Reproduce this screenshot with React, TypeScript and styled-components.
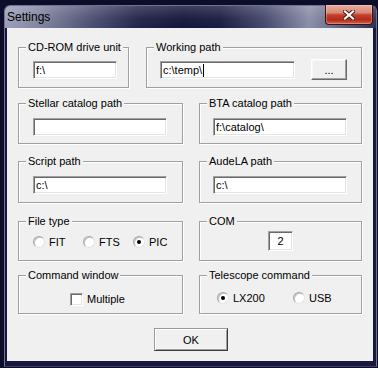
import React from "react";
import styled, { createGlobalStyle } from "styled-components";

const Global = createGlobalStyle`
  html, body { margin: 0; padding: 0; background: #0c0d29; }
  body { width: 378px; height: 368px; overflow: hidden; font-family: "Liberation Sans", Arial, sans-serif; }
  * { box-sizing: border-box; }
`;

const Page = styled.div`
  width: 378px;
  height: 368px;
  padding: 5px 1px 1px 4px;
  display: flex;
`;

const Window = styled.div`
  flex: 1;
  display: flex;
  flex-direction: column;
  border: 1px solid #6f7292;
  border-bottom-color: #3b3d5c;
  border-radius: 6px 6px 0 0;
  background: #17183b;
`;

const TitleBar = styled.div`
  height: 22px;
  display: flex;
  align-items: flex-start;
  padding-left: 2px;
  border-radius: 5px 5px 0 0;
  background:
    linear-gradient(180deg, rgba(255,255,255,0.18) 0%, rgba(255,255,255,0.04) 55%, rgba(0,0,0,0) 100%),
    linear-gradient(90deg, #9c9fb8 0%, #7f829e 10%, #4a4c70 24%, #22234a 36%, #14153a 48%, #1b1c42 58%, #45476c 70%, #8b8ea8 82%, #6c6f8d 88%, #2c2e52 100%);
`;

const Title = styled.span`
  font-size: 12px;
  line-height: 14px;
  padding-top: 4px;
  color: #000;
  flex: 1;
`;

const CloseButton = styled.div`
  width: 48px;
  height: 20px;
  margin: -1px 3px 0 0;
  border: 1px solid #3b1410;
  border-top: none;
  border-radius: 0 0 4px 4px;
  background: linear-gradient(180deg, #e9ab9c 0%, #d98a78 40%, #c4402d 52%, #b52a1a 78%, #d0654f 100%);
  box-shadow: inset 0 0 0 1px rgba(255,255,255,0.25);
  display: flex;
  align-items: center;
  justify-content: center;
`;

const Client = styled.div`
  flex: 1;
  margin: 0 3px 5px 2px;
  background: #f0f0f0;
  padding: 19px 11px 0 11px;
  display: flex;
  flex-direction: column;
  font-size: 11px;
  color: #000;
`;

const Row = styled.div<{ $cols: string; $mt?: number }>`
  display: grid;
  grid-template-columns: ${(p) => p.$cols};
  column-gap: ${(p) => (p.$cols === "111px 216px" ? 17 : 16)}px;
  margin-top: ${(p) => p.$mt ?? 0}px;
`;

const Group = styled.div<{ $h: number; $pt?: number; $pl?: number; $center?: boolean }>`
  position: relative;
  height: ${(p) => p.$h}px;
  border: 1px solid #a0a0a0;
  box-shadow: inset 1px 1px 0 #fff, 1px 1px 0 #fff;
  padding: ${(p) => p.$pt ?? 13}px 0 0 ${(p) => p.$pl ?? 14}px;
  display: flex;
  align-items: flex-start;
  justify-content: ${(p) => (p.$center ? "center" : "flex-start")};
`;

const Legend = styled.span`
  position: absolute;
  top: -7px;
  left: 7px;
  padding: 0 2px;
  background: #f0f0f0;
  line-height: 13px;
  white-space: nowrap;
`;

const Field = styled.div<{ $w: number; $h?: number; $center?: boolean }>`
  width: ${(p) => p.$w}px;
  height: ${(p) => p.$h ?? 18}px;
  background: #fff;
  border: 1px solid;
  border-color: #a0a0a0 #fff #fff #a0a0a0;
  box-shadow: inset 1px 1px 0 #696969, inset -1px -1px 0 #e3e3e3;
  padding: 0 2px;
  line-height: ${(p) => (p.$h ?? 18) - 2}px;
  text-align: ${(p) => (p.$center ? "center" : "left")};
  white-space: nowrap;
  overflow: hidden;
  display: flex;
  align-items: center;
  justify-content: ${(p) => (p.$center ? "center" : "flex-start")};
`;

const Caret = styled.span`
  display: inline-block;
  width: 1px;
  height: 13px;
  background: #000;
  margin-left: 1px;
`;

const Button = styled.button<{ $w: number; $h: number; $default?: boolean }>`
  width: ${(p) => p.$w}px;
  height: ${(p) => p.$h}px;
  padding: 0;
  font-family: "Liberation Sans", Arial, sans-serif;
  font-size: 11px;
  color: #000;
  background: #f0f0f0;
  border: 1px solid;
  border-color: ${(p) => (p.$default ? "#9a9a9a #3c3c3c #3c3c3c #9a9a9a" : "#fff #696969 #696969 #fff")};
  box-shadow: ${(p) =>
    p.$default ? "inset 1px 1px 0 #fff, inset -1px -1px 0 #a0a0a0" : "inset -1px -1px 0 #a0a0a0, inset 1px 1px 0 #f8f8f8"};
`;

const Options = styled.div<{ $step: number }>`
  display: flex;
  > label { width: ${(p) => p.$step}px; }
`;

const Option = styled.label`
  display: flex;
  align-items: center;
  gap: 4px;
  height: 14px;
  white-space: nowrap;
`;

const Radio = styled.span<{ $on?: boolean }>`
  width: 12px;
  height: 12px;
  border-radius: 50%;
  background: #fff;
  border: 1px solid;
  border-color: #a6a6a6 #e4e4e4 #e4e4e4 #a6a6a6;
  box-shadow: inset 1px 1px 0 #c4c4c4;
  display: flex;
  align-items: center;
  justify-content: center;
  &::after {
    content: "";
    width: 4px;
    height: 4px;
    border-radius: 50%;
    background: ${(p) => (p.$on ? "#000" : "transparent")};
  }
`;

const Check = styled.span`
  width: 13px;
  height: 13px;
  background: #fff;
  border: 1px solid;
  border-color: #a0a0a0 #fff #fff #a0a0a0;
  box-shadow: inset 1px 1px 0 #696969, inset -1px -1px 0 #e3e3e3;
`;

const Footer = styled.div`
  margin-top: 14px;
  display: flex;
  justify-content: center;
  padding-left: 2px;
`;

function CloseIcon() {
  return (
    <svg width="12" height="10" viewBox="0 0 12 10">
      <path d="M2 1.5 L10 8.5 M10 1.5 L2 8.5" stroke="#4a1a14" strokeWidth="4" strokeLinecap="square" />
      <path d="M2 1.5 L10 8.5 M10 1.5 L2 8.5" stroke="#fff" strokeWidth="2.2" strokeLinecap="square" />
    </svg>
  );
}

export default function App() {
  return (
    <Page>
      <Global />
      <Window>
        <TitleBar>
          <Title>Settings</Title>
          <CloseButton>
            <CloseIcon />
          </CloseButton>
        </TitleBar>
        <Client>
          <Row $cols="111px 216px">
            <Group $h={41}>
              <Legend>CD-ROM drive unit</Legend>
              <Field $w={84}>f:\</Field>
            </Group>
            <Group $h={41} $pl={13}>
              <Legend>Working path</Legend>
              <Field $w={135}>
                c:\temp\<Caret />
              </Field>
              <Button $w={36} $h={21} style={{ marginLeft: 16, marginTop: -2 }}>
                ...
              </Button>
            </Group>
          </Row>

          <Row $cols="165px 163px" $mt={15}>
            <Group $h={41} $pt={14}>
              <Legend>Stellar catalog path</Legend>
              <Field $w={134} />
            </Group>
            <Group $h={41} $pt={14} $pl={13}>
              <Legend>BTA catalog path</Legend>
              <Field $w={134}>f:\catalog\</Field>
            </Group>
          </Row>

          <Row $cols="165px 163px" $mt={17}>
            <Group $h={42} $pt={14}>
              <Legend>Script path</Legend>
              <Field $w={134}>c:\</Field>
            </Group>
            <Group $h={42} $pt={14} $pl={13}>
              <Legend>AudeLA path</Legend>
              <Field $w={134}>c:\</Field>
            </Group>
          </Row>

          <Row $cols="165px 163px" $mt={18}>
            <Group $h={40} $pt={13}>
              <Legend>File type</Legend>
              <Options $step={50}>
                <Option>
                  <Radio />
                  FIT
                </Option>
                <Option>
                  <Radio />
                  FTS
                </Option>
                <Option>
                  <Radio $on />
                  PIC
                </Option>
              </Options>
            </Group>
            <Group $h={40} $pt={9} $pl={0} $center>
              <Legend>COM</Legend>
              <Field $w={25} $h={20} $center>
                2
              </Field>
            </Group>
          </Row>

          <Row $cols="165px 163px" $mt={14}>
            <Group $h={39} $pt={16} $pl={51}>
              <Legend>Command window</Legend>
              <Option>
                <Check />
                Multiple
              </Option>
            </Group>
            <Group $h={39} $pt={15} $pl={17}>
              <Legend>Telescope command</Legend>
              <Options $step={76}>
                <Option>
                  <Radio $on />
                  LX200
                </Option>
                <Option>
                  <Radio />
                  USB
                </Option>
              </Options>
            </Group>
          </Row>

          <Footer>
            <Button $w={74} $h={23} $default>
              OK
            </Button>
          </Footer>
        </Client>
      </Window>
    </Page>
  );
}
